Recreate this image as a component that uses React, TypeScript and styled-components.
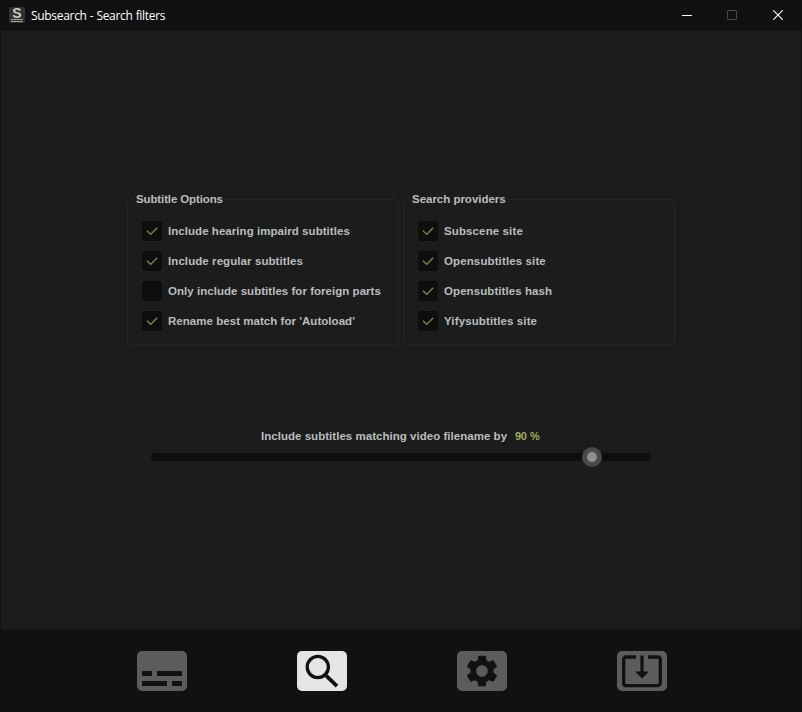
import React from "react";
import styled, { createGlobalStyle } from "styled-components";

const Global = createGlobalStyle`
  * { box-sizing: border-box; }
  body { margin: 0; background: #111111; overflow: hidden; }
`;

const Window = styled.div`
  width: 802px;
  height: 712px;
  display: flex;
  flex-direction: column;
  background: #111111;
  font: bold 11.5px/14px "Liberation Sans", Arial, sans-serif;
  color: #bcbcbc;
`;

const TitleBar = styled.header`
  height: 31px;
  display: flex;
  align-items: center;
  padding-left: 9px;
`;

const Title = styled.h1`
  flex: 1;
  margin: 1px 0 0 6px;
  font: 400 12px/16px "Open Sans", "Noto Sans", sans-serif;
  letter-spacing: -0.31px;
  word-spacing: 0.3px;
  color: #ffffff;
`;

const WindowButton = styled.button<{ $color: string; $width: number }>`
  width: ${(p) => p.$width}px;
  height: 30px;
  padding: 0;
  border: 0;
  background: none;
  color: ${(p) => p.$color};
  display: grid;
  place-items: center;
  svg { display: block; }
`;

const WindowControls = styled.div`
  display: flex;
  align-self: flex-start;
  padding-right: 1px;
`;

const Content = styled.main`
  flex: 1;
  margin: 0 1px;
  padding-top: 161px;
  background: #1b1d1c;
  display: flex;
  flex-direction: column;
  align-items: center;
`;

const Panels = styled.div`
  display: flex;
  gap: 4px;
`;

const Panel = styled.section`
  width: 272px;
  height: 154px;
  display: grid;
  grid-template-rows: 14px 1fr;
`;

const PanelTitle = styled.h2<{ $spacing: number }>`
  grid-area: 1 / 1;
  justify-self: start;
  z-index: 1;
  margin: 0 0 0 7px;
  padding: 0 1px 0 2px;
  background: #1b1d1c;
  font: inherit;
  white-space: nowrap;
  letter-spacing: ${(p) => p.$spacing}px;
`;

const PanelFrame = styled.div`
  grid-area: 1 / 1 / 3 / 2;
  margin-top: 7px;
  padding: 21px 0 0 14px;
  border: 1px solid #262827;
  border-radius: 5px;
  display: flex;
  flex-direction: column;
  gap: 10px;
`;

const Option = styled.label`
  display: flex;
  align-items: center;
  gap: 6px;
  height: 20px;
`;

const Box = styled.span`
  width: 20px;
  height: 20px;
  border-radius: 3px;
  background: #0e0e0e;
  display: block;
  svg { display: block; }
`;

const Label = styled.span<{ $spacing: number }>`
  white-space: nowrap;
  letter-spacing: ${(p) => p.$spacing}px;
`;

const SliderGroup = styled.div`
  width: 500px;
  margin-top: 83px;
`;

const SliderCaption = styled.div`
  display: grid;
  grid-template-columns: 254px auto;
  justify-content: start;
  padding-left: 110px;
`;

const Percent = styled.span`
  color: #9bae5a;
  white-space: nowrap;
  font-size: 11px;
  letter-spacing: -0.4px;
  word-spacing: 0.8px;
`;

const Track = styled.div`
  height: 8px;
  margin-top: 10px;
  border-radius: 4px;
  background: #0d0d0d;
  display: flex;
  align-items: center;
  padding-left: 431px;
`;

const Thumb = styled.div`
  flex: none;
  width: 20px;
  height: 20px;
  border: 5px solid #4a4a4a;
  border-radius: 50%;
  background: #929292;
`;

const Nav = styled.nav`
  height: 83px;
  padding: 22px 80px 0 82px;
  display: grid;
  grid-template-columns: repeat(4, 160px);
  justify-items: center;
  align-items: start;
`;

const NavButton = styled.button<{ $active?: boolean }>`
  width: 50px;
  height: 40px;
  padding: 0;
  border: 0;
  border-radius: 5px;
  background: ${(p) => (p.$active ? "#e4e6e5" : "#5b5d5c")};
  color: #111111;
  svg { display: block; }
`;

const Logo = styled.svg`
  display: block;
  overflow: visible;
  margin-top: -1px;
`;

const AppIcon = () => (
  <Logo width="16" height="16" viewBox="0 0 16 16">
    <rect width="16" height="16" rx="1.5" fill="#303030" />
    <text x="8" y="10.7" textAnchor="middle" fontFamily="Liberation Sans" fontWeight="700" fontSize="14" fill="#c8c8c8">S</text>
    <path d="M2 12.5h12" stroke="#999" />
    <path d="M2 14.5h12" stroke="#bbb" strokeDasharray="2.5 .5" />
  </Logo>
);

const Check = () => (
  <svg width="20" height="20" viewBox="0 0 20 20">
    <path d="M5 9.8l3.7 3.6 6.5-6.7" fill="none" stroke="#868b4c" strokeWidth="1.3" />
  </svg>
);

type Item = { text: string; spacing: number; checked: boolean };

const subtitleOptions: Item[] = [
  { text: "Include hearing impaird subtitles", spacing: 0.05, checked: true },
  { text: "Include regular subtitles", spacing: 0.08, checked: true },
  { text: "Only include subtitles for foreign parts", spacing: 0.035, checked: false },
  { text: "Rename best match for 'Autoload'", spacing: 0.04, checked: true },
];

const providers: Item[] = [
  { text: "Subscene site", spacing: 0.12, checked: true },
  { text: "Opensubtitles site", spacing: 0.12, checked: true },
  { text: "Opensubtitles hash", spacing: 0.08, checked: true },
  { text: "Yifysubtitles site", spacing: 0.12, checked: true },
];

const OptionPanel = ({ title, spacing, items }: { title: string; spacing: number; items: Item[] }) => (
  <Panel>
    <PanelTitle $spacing={spacing}>{title}</PanelTitle>
    <PanelFrame>
      {items.map((item) => (
        <Option key={item.text}>
          <Box>{item.checked && <Check />}</Box>
          <Label $spacing={item.spacing}>{item.text}</Label>
        </Option>
      ))}
    </PanelFrame>
  </Panel>
);

export default function App() {
  return (
    <Window>
      <Global />
      <TitleBar>
        <AppIcon />
        <Title>Subsearch - Search filters</Title>
        <WindowControls>
          <WindowButton $color="#ffffff" $width={44} aria-label="Minimize">
            <svg width="10" height="10"><path d="M0 5.5h10" stroke="currentColor" /></svg>
          </WindowButton>
          <WindowButton $color="#484848" $width={46} aria-label="Maximize">
            <svg width="10" height="10"><rect x=".5" y=".5" width="9" height="9" rx=".5" fill="none" stroke="currentColor" /></svg>
          </WindowButton>
          <WindowButton $color="#ffffff" $width={46} aria-label="Close">
            <svg width="10" height="10"><path d="M.3.3l9.4 9.4M9.7.3L.3 9.7" stroke="currentColor" strokeWidth="1.1" /></svg>
          </WindowButton>
        </WindowControls>
      </TitleBar>
      <Content>
        <Panels>
          <OptionPanel title="Subtitle Options" spacing={-0.12} items={subtitleOptions} />
          <OptionPanel title="Search providers" spacing={-0.02} items={providers} />
        </Panels>
        <SliderGroup>
          <SliderCaption>
            <Label $spacing={0.03}>Include subtitles matching video filename by</Label>
            <Percent>90 %</Percent>
          </SliderCaption>
          <Track>
            <Thumb />
          </Track>
        </SliderGroup>
      </Content>
      <Nav>
        <NavButton aria-label="Subtitles">
          <svg width="50" height="40" fill="currentColor">
            <path d="M5 20h10v5H5zM20 20h25v5H20zM5 30h25v5H5zM35 30h10v5H35z" />
          </svg>
        </NavButton>
        <NavButton $active aria-label="Search filters">
          <svg width="50" height="40" fill="none" stroke="currentColor">
            <circle cx="20.8" cy="16" r="10.6" strokeWidth="3.3" />
            <path d="M29.1 24.7L40 35.2" strokeWidth="3.8" />
          </svg>
        </NavButton>
        <NavButton aria-label="Settings">
          <svg width="50" height="40" fill="currentColor">
            <path
              transform="translate(5.8 .8) scale(1.6)"
              d="M19.14 12.94c.04-.3.06-.61.06-.94 0-.32-.02-.64-.07-.94l2.03-1.58c.18-.14.23-.41.12-.61l-1.92-3.32c-.12-.22-.37-.29-.59-.22l-2.39.96c-.5-.38-1.03-.7-1.62-.94l-.36-2.54c-.04-.24-.24-.41-.48-.41h-3.84c-.24 0-.43.17-.47.41l-.36 2.54c-.59.24-1.13.57-1.62.94l-2.39-.96c-.22-.08-.47 0-.59.22L2.74 8.87c-.12.21-.08.47.12.61l2.03 1.58c-.05.3-.09.63-.09.94s.02.64.07.94l-2.03 1.58c-.18.14-.23.41-.12.61l1.92 3.32c.12.22.37.29.59.22l2.39-.96c.5.38 1.03.7 1.62.94l.36 2.54c.05.24.24.41.48.41h3.84c.24 0 .44-.17.47-.41l.36-2.54c.59-.24 1.13-.56 1.62-.94l2.39.96c.22.08.47 0 .59-.22l1.92-3.32c.12-.22.07-.47-.12-.61l-2.01-1.58zM12 15.6c-1.98 0-3.6-1.62-3.6-3.6s1.62-3.6 3.6-3.6 3.6 1.62 3.6 3.6-1.62 3.6-3.6 3.6z"
            />
          </svg>
        </NavButton>
        <NavButton aria-label="Download">
          <svg width="50" height="40" fill="none" stroke="currentColor">
            <path d="M19 6H9a2.3 2.3 0 0 0-2.3 2.3v24A2.3 2.3 0 0 0 9 34.6h32a2.3 2.3 0 0 0 2.3-2.3v-24A2.3 2.3 0 0 0 41 6H31" strokeWidth="3.3" />
            <path d="M25 4.5v18" strokeWidth="3.3" />
            <path d="M18 20.5h14l-7 7z" fill="currentColor" stroke="none" />
          </svg>
        </NavButton>
      </Nav>
    </Window>
  );
}
